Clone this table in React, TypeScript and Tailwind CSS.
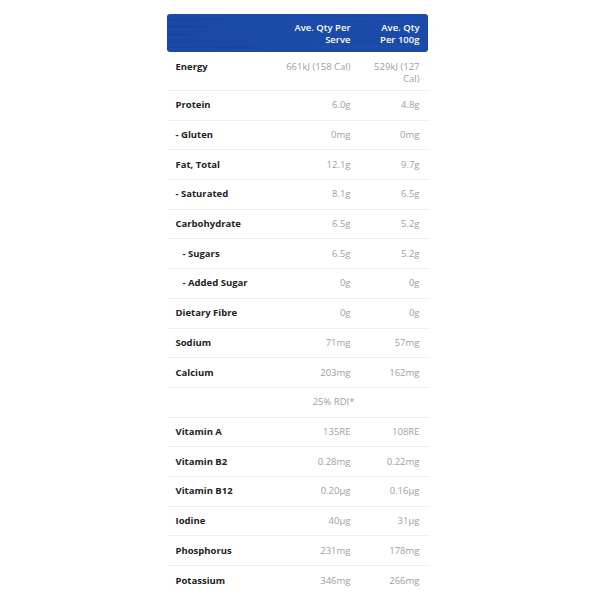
import React from "react";

type Row = { label: string; a: string; b: string; indent?: boolean };

const rows: Row[] = [
  { label: "Protein", a: "6.0g", b: "4.8g" },
  { label: "- Gluten", a: "0mg", b: "0mg" },
  { label: "Fat, Total", a: "12.1g", b: "9.7g" },
  { label: "- Saturated", a: "8.1g", b: "6.5g" },
  { label: "Carbohydrate", a: "6.5g", b: "5.2g" },
  { label: "- Sugars", a: "6.5g", b: "5.2g", indent: true },
  { label: "- Added Sugar", a: "0g", b: "0g", indent: true },
  { label: "Dietary Fibre", a: "0g", b: "0g" },
  { label: "Sodium", a: "71mg", b: "57mg" },
  { label: "Calcium", a: "203mg", b: "162mg" },
  { label: "", a: "25% RDI*", b: "" },
  { label: "Vitamin A", a: "135RE", b: "108RE" },
  { label: "Vitamin B2", a: "0.28mg", b: "0.22mg" },
  { label: "Vitamin B12", a: "0.20µg", b: "0.16µg" },
  { label: "Iodine", a: "40µg", b: "31µg" },
  { label: "Phosphorus", a: "231mg", b: "178mg" },
  { label: "Potassium", a: "346mg", b: "266mg" },
];

const font = { fontFamily: "'Open Sans', 'Noto Sans', sans-serif" };

export default function App() {
  return (
    <div className="w-[597px] h-[600px] bg-white flex justify-center" style={font}>
      <div className="w-[263px] mt-[14px] ml-[-1px]">
        {/* header */}
        <div className="relative h-[38px] w-[261px] bg-[#1c4aa9] rounded-[3px] overflow-hidden">
          <svg className="absolute inset-0" width="261" height="38" viewBox="0 0 261 38">
            <path d="M0 6 L60 5 M0 12 L40 13 M2 20 L30 21 M0 28 L50 27 M3 33 L90 34" stroke="#163f95" strokeWidth="1.2" opacity="0.6" />
            <path d="M120 4 L250 5 M150 33 L258 32" stroke="#2556b5" strokeWidth="1" opacity="0.5" />
          </svg>
          <div className="relative grid grid-cols-[1fr_70px_52px] gap-x-[17px] pr-[8px] pt-[8px] text-white text-[9.5px] leading-[12px] font-semibold text-right whitespace-nowrap">
            <div />
            <div>Ave. Qty Per<br />Serve</div>
            <div>Ave. Qty<br />Per 100g</div>
          </div>
        </div>
        {/* energy */}
        <div className="grid grid-cols-[1fr_70px_52px] gap-x-[17px] pl-[9px] pr-[10px] h-[39px] pt-[9px] items-start border-b border-[#efefef] text-[9.5px] leading-[12px] whitespace-nowrap">
          <div className="font-bold text-[#222]">Energy</div>
          <div className="text-right text-[#a0a0a0]">661kJ (158 Cal)</div>
          <div className="text-right text-[#a0a0a0]">529kJ (127<br />Cal)</div>
        </div>
        {rows.map((r, i) => (
          <div
            key={i}
            className={`grid grid-cols-[1fr_70px_52px] gap-x-[17px] pl-[9px] pr-[10px] h-[29.69px] items-center text-[9.5px] leading-[12px] whitespace-nowrap ${
              i === rows.length - 1 ? "" : "border-b border-[#efefef]"
            }`}
          >
            <div className={`font-bold text-[#222] ${r.indent ? "pl-[7px]" : ""}`}>{r.label}</div>
            <div className={`text-right text-[#a0a0a0] ${r.label === "" ? "mr-[-4px]" : ""}`}>{r.a}</div>
            <div className="text-right text-[#a0a0a0]">{r.b}</div>
          </div>
        ))}
      </div>
    </div>
  );
}
